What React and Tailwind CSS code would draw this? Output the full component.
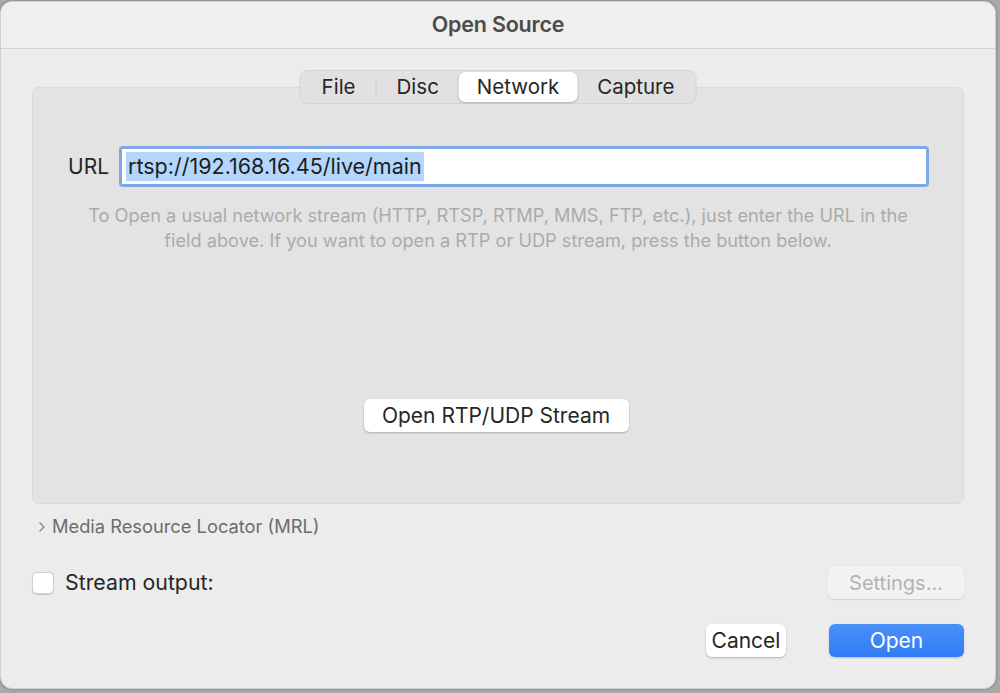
export default function App() {
  const tabs = ['File', 'Disc', 'Network', 'Capture'];
  return (
    <div className="w-[1000px] h-[693px] bg-[#a9a9a9] overflow-hidden pt-px" style={{ fontFamily: 'Inter, "Noto Sans", sans-serif' }}>
      <div className="w-[996px] h-[688px] bg-[#ececec] rounded-[12px] border border-[#d0d0d0] overflow-hidden flex flex-col shadow-[0_0_3px_rgba(0,0,0,0.3)]">
        {/* title bar */}
        <div className="h-[47px] shrink-0 bg-[#efefef] border-b border-[#d2d2d2] flex items-center justify-center pb-[2px]">
          <span className="text-[21.5px] font-semibold text-[#4b4b4b] tracking-[-0.2px]">Open Source</span>
        </div>

        <div className="flex-1 flex flex-col px-[31px]">
          {/* tabbed panel */}
          <div className="relative mt-[38px] h-[417px] bg-[#e3e3e3] border border-[#dadada] rounded-[7px] flex flex-col">
            <div className="absolute left-1/2 -translate-x-1/2 -top-[18px] flex items-center h-[34px] p-px bg-[#e1e1e1] border border-[#d4d4d4] rounded-[8px]">
              {tabs.map((t, i) => (
                <div key={t} className="flex items-center h-full">
                  {i === 1 && <div className="w-px h-[18px] bg-[#cfcfcf]" />}
                  <div
                    className={
                      t === 'Network'
                        ? 'h-full flex items-center px-[18px] bg-white rounded-[7px] shadow-[0_1px_2px_rgba(0,0,0,0.2)] text-[20.5px] text-[#262626]'
                        : 'h-full flex items-center px-[20px] text-[20.5px] text-[#262626]'
                    }
                  >
                    {t}
                  </div>
                </div>
              ))}
            </div>

            <div className="flex items-center mt-[58px] pl-[35px] pr-[34px]">
              <span className="text-[21px] text-[#262626] mr-[10px]">URL</span>
              <div className="flex-1 h-[41px] rounded-[4px] bg-[#7ca8e8] p-[3px]">
                <div className="h-full bg-white flex items-center pl-[4px]">
                  <span className="bg-[#b4d6fd] text-[21.5px] text-[#1d1d1d] leading-[29px] px-[2px]">rtsp://192.168.16.45/live/main</span>
                </div>
              </div>
            </div>

            <p className="mt-[16px] text-center text-[18.2px] leading-[25px] text-[#ababab] px-[20px]">
              To Open a usual network stream (HTTP, RTSP, RTMP, MMS, FTP, etc.), just enter the URL in the
              <br />
              field above. If you want to open a RTP or UDP stream, press the button below.
            </p>

            <div className="flex justify-center mt-[146px]">
              <button className="h-[33px] w-[265px] bg-white rounded-[6px] shadow-[0_1px_2px_rgba(0,0,0,0.25)] text-[21px] text-[#262626] -ml-[4px]">
                Open RTP/UDP Stream
              </button>
            </div>
          </div>

          {/* disclosure */}
          <div className="flex items-center mt-[9px] pl-[6px] text-[#6c6c6c]">
            <svg width="8" height="12" viewBox="0 0 8 12" className="mr-[6px]">
              <path d="M1.5 1.5 L6 6 L1.5 10.5" fill="none" stroke="#8a8a8a" strokeWidth="1.4" />
            </svg>
            <span className="text-[18.3px]">Media Resource Locator (MRL)</span>
          </div>

          {/* stream output */}
          <div className="flex items-center mt-[26px]">
            <div className="w-[22px] h-[22px] bg-white rounded-[5px] border border-[#cfcfcf] shadow-[0_0.5px_1px_rgba(0,0,0,0.15)]" />
            <span className="ml-[11px] text-[21.3px] text-[#262626]">Stream output:</span>
            <button className="ml-auto h-[33px] w-[136px] bg-[#f2f2f2] rounded-[6px] shadow-[0_0.5px_1px_rgba(0,0,0,0.12)] text-[20px] text-[#b3b3b3]">
              Settings...
            </button>
          </div>

          {/* action buttons */}
          <div className="flex justify-end items-center mt-[25px] gap-[43px]">
            <button className="h-[33px] w-[80px] bg-white rounded-[6px] shadow-[0_1px_2px_rgba(0,0,0,0.25)] text-[21px] text-[#262626]">
              Cancel
            </button>
            <button className="h-[33px] w-[135px] bg-gradient-to-b from-[#4b90f8] to-[#2f7cf6] rounded-[6px] shadow-[0_1px_2px_rgba(0,0,0,0.2)] text-[21px] text-white">
              Open
            </button>
          </div>
        </div>
      </div>
    </div>
  );
}
